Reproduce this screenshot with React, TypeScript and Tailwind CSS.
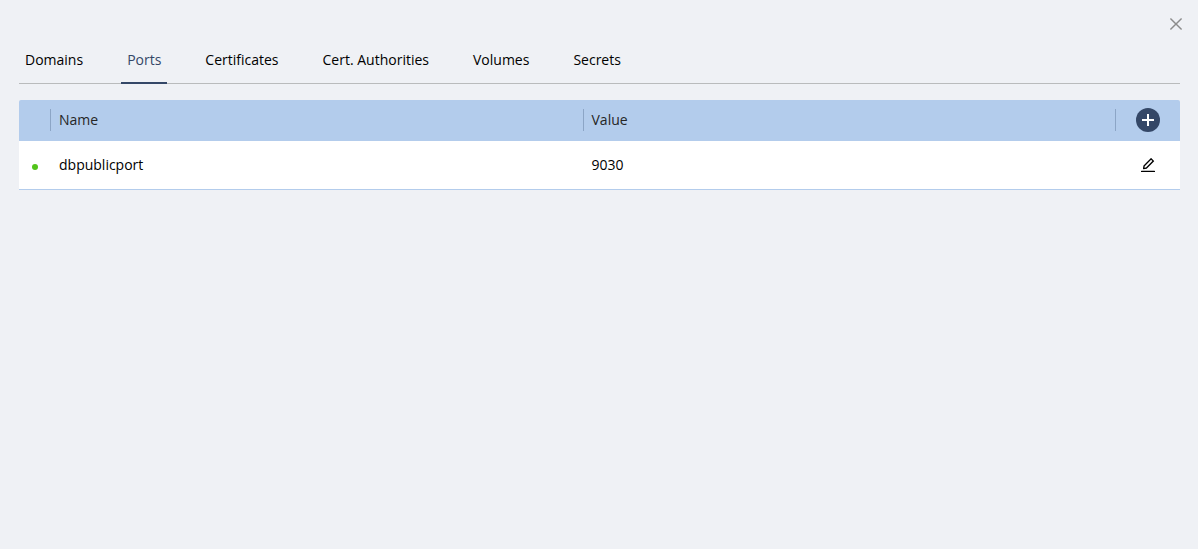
import React from 'react';
import { AiOutlineClose, AiOutlineEdit } from 'react-icons/ai';

const tabs = ['Domains', 'Ports', 'Certificates', 'Cert. Authorities', 'Volumes', 'Secrets'];

const ports = [{ name: 'dbpublicport', value: '9030' }];

const Tabs: React.FC<{ active: string }> = ({ active }) => {
    return (
        <nav role="tablist" className="flex gap-8 border-b border-[#b9bbbc]">
            {tabs.map((tab) => (
                <button
                    key={tab}
                    type="button"
                    role="tab"
                    aria-selected={tab === active}
                    className={
                        tab === active
                            ? '-mb-px px-1.5 pt-[13px] pb-[11px] border-b-2 border-[#344767] text-[#344767]'
                            : '-mb-px px-1.5 pt-[13px] pb-[11px] border-b-2 border-transparent'
                    }
                >
                    {tab}
                </button>
            ))}
        </nav>
    );
};

const App: React.FC = () => {
    return (
        <div className="min-h-screen bg-[#eff1f5] pt-[15px] pr-[18px] pl-[19px] font-['Open_Sans','Noto_Sans',sans-serif] text-sm leading-[22px] text-black">
            <div className="-mr-[5px] mb-[3px] flex justify-end">
                <button type="button" aria-label="Close" className="text-[#8c8c8c]">
                    <AiOutlineClose size={18} />
                </button>
            </div>

            <Tabs active="Ports" />

            <div className="mt-4 overflow-hidden rounded-t-xs">
                <table className="w-full table-fixed border-separate border-spacing-0">
                    <colgroup>
                        <col className="w-[31px]" />
                        <col />
                        <col />
                        <col className="w-[65px]" />
                    </colgroup>
                    <thead>
                        <tr className="h-[41px] bg-[#b3ccec] text-left text-[#262626] *:pb-0.5">
                            <th></th>
                            <th className="font-normal">
                                <div className="border-l border-[#8ca5c6] pl-2">Name</div>
                            </th>
                            <th className="font-normal">
                                <div className="border-l border-[#8ca5c6] pl-2">Value</div>
                            </th>
                            <th>
                                <div className="flex h-[22px] items-center justify-center border-l border-[#8ca5c6]">
                                    <button
                                        type="button"
                                        aria-label="Add port"
                                        className="flex size-6 shrink-0 items-center justify-center rounded-full bg-[#344767] text-white"
                                    >
                                        <svg width="12" height="12" viewBox="0 0 12 12" stroke="currentColor" strokeWidth="2">
                                            <path d="M6 0v12M0 6h12" />
                                        </svg>
                                    </button>
                                </div>
                            </th>
                        </tr>
                    </thead>
                    <tbody>
                        {ports.map((port) => (
                            <tr key={port.name} className="h-[49px] bg-white *:border-b *:border-[#b3ccec]">
                                <td className="pt-1">
                                    <span className="mx-auto block size-1.5 rounded-full bg-[#52c41a]"></span>
                                </td>
                                <td className="pl-[9px]">{port.name}</td>
                                <td className="pl-[9px]">{port.value}</td>
                                <td>
                                    <button
                                        type="button"
                                        aria-label={`Edit ${port.name}`}
                                        className="mx-auto block"
                                    >
                                        <AiOutlineEdit size={18} />
                                    </button>
                                </td>
                            </tr>
                        ))}
                    </tbody>
                </table>
            </div>
        </div>
    );
};

export default App;
